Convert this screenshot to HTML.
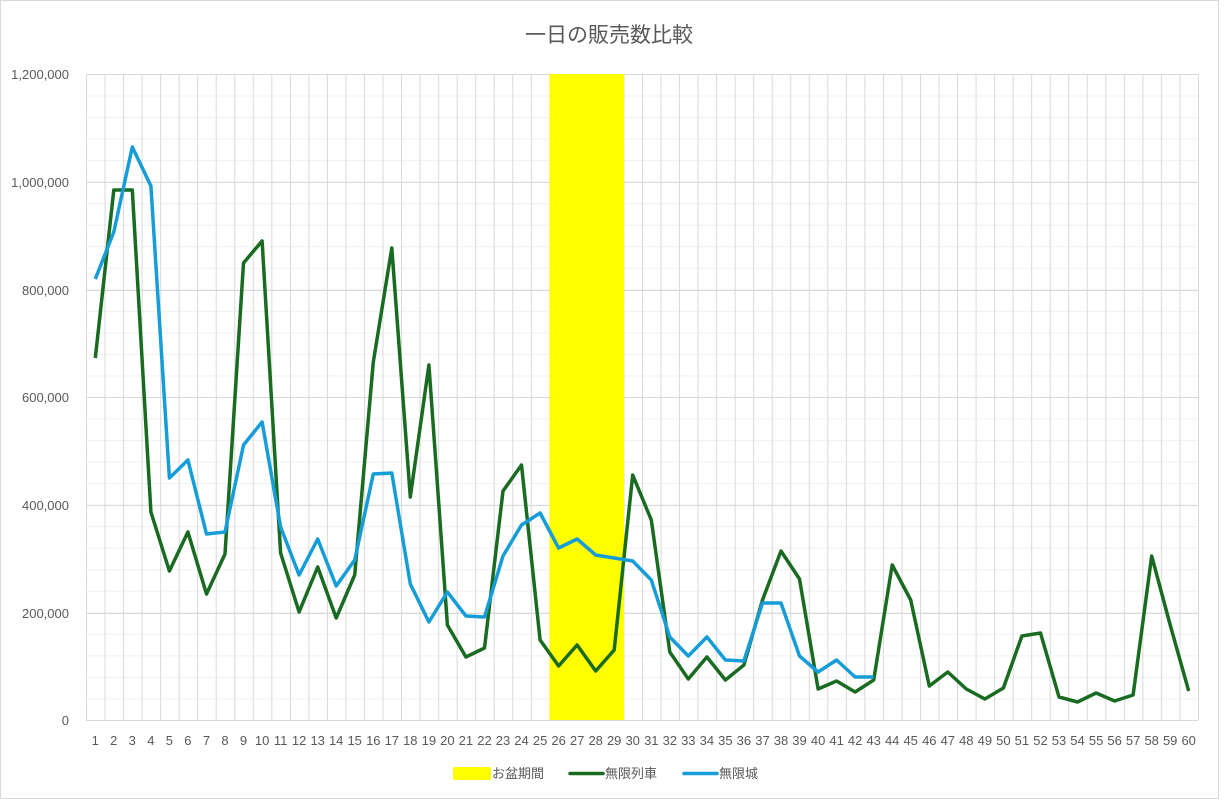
<!DOCTYPE html>
<html><head><meta charset="utf-8"><style>
html,body{margin:0;padding:0;background:#fff}
svg{display:block}
text{font-family:"Liberation Sans","Noto Sans CJK JP",sans-serif;fill:#595959}
</style></head><body>
<svg width="1224" height="801" viewBox="0 0 1224 801" xmlns="http://www.w3.org/2000/svg">
<defs>
<pattern id="minor" x="86" y="74" width="18.533" height="21.533" patternUnits="userSpaceOnUse">
<path d="M0 0.5H18.533" stroke="#f0f0f0" stroke-width="1"/>
</pattern>
<pattern id="vert" x="86" y="0" width="18.533" height="801" patternUnits="userSpaceOnUse">
<path d="M0.5 0V801" stroke="#d9d9d9" stroke-width="1"/>
</pattern>
</defs>
<rect x="0.5" y="0.5" width="1218" height="798" fill="#fff" stroke="#d9d9d9"/>
<text x="609" y="42" font-size="21" text-anchor="middle">一日の販売数比較</text>
<rect x="86" y="74" width="1112" height="646" fill="url(#minor)"/>
<rect x="86" y="74" width="1113" height="646" fill="url(#vert)"/>
<g stroke="#d9d9d9" stroke-width="1">
<path d="M86 74.5H1198M86 182.5H1198M86 290.5H1198M86 397.5H1198M86 505.5H1198M86 613.5H1198M86 720.5H1198"/>
</g>
<rect x="549.5" y="74" width="74.5" height="646" fill="#ffff00"/>
<g font-size="13" text-anchor="end">
<text x="69" y="79">1,200,000</text>
<text x="69" y="187">1,000,000</text>
<text x="69" y="295">800,000</text>
<text x="69" y="402">600,000</text>
<text x="69" y="510">400,000</text>
<text x="69" y="618">200,000</text>
<text x="69" y="725">0</text>
</g>
<polyline fill="none" stroke="#1a6b22" stroke-width="3.5" stroke-linejoin="round" points="95.3,358 113.8,190 132.3,190 150.9,512 169.4,571 187.9,532 206.5,594 225,554 243.5,263 262.1,241 280.6,553 299.1,612 317.7,567 336.2,618 354.7,575 373.3,362 391.8,248 410.3,497 428.9,365 447.4,625 465.9,657 484.5,648 503,491 521.5,465 540.1,640 558.6,666 577.1,645 595.7,671 614.2,650 632.7,475 651.3,520 669.8,652 688.3,679 706.9,657 725.4,680 743.9,665 762.5,600 781,551 799.5,579 818.1,689 836.6,681 855.1,692 873.7,680 892.2,565 910.7,600 929.3,686 947.8,672 966.3,689 984.9,699 1003.4,688 1021.9,636 1040.5,633 1059,697 1077.5,702 1096.1,693 1114.6,701 1133.1,695 1151.7,556 1170.2,625 1188.7,691"/>
<polyline fill="none" stroke="#169dd8" stroke-width="3.5" stroke-linejoin="round" points="95.3,279 113.8,232 132.3,147 150.9,186 169.4,478 187.9,460 206.5,534 225,532 243.5,445 262.1,422 280.6,527 299.1,575 317.7,539 336.2,586 354.7,560 373.3,474 391.8,473 410.3,584 428.9,622 447.4,592 465.9,616 484.5,617 503,556 521.5,525 540.1,513 558.6,548 577.1,539 595.7,555 614.2,558 632.7,561 651.3,580 669.8,637 688.3,656 706.9,637 725.4,660 743.9,661 762.5,603 781,603 799.5,656 818.1,672 836.6,660 855.1,677 873.7,677"/>
<g font-size="13" text-anchor="middle">
<text x="95.3" y="745">1</text><text x="113.8" y="745">2</text><text x="132.3" y="745">3</text><text x="150.9" y="745">4</text><text x="169.4" y="745">5</text><text x="187.9" y="745">6</text><text x="206.5" y="745">7</text><text x="225" y="745">8</text><text x="243.5" y="745">9</text><text x="262.1" y="745">10</text>
<text x="280.6" y="745">11</text><text x="299.1" y="745">12</text><text x="317.7" y="745">13</text><text x="336.2" y="745">14</text><text x="354.7" y="745">15</text><text x="373.3" y="745">16</text><text x="391.8" y="745">17</text><text x="410.3" y="745">18</text><text x="428.9" y="745">19</text><text x="447.4" y="745">20</text>
<text x="465.9" y="745">21</text><text x="484.5" y="745">22</text><text x="503" y="745">23</text><text x="521.5" y="745">24</text><text x="540.1" y="745">25</text><text x="558.6" y="745">26</text><text x="577.1" y="745">27</text><text x="595.7" y="745">28</text><text x="614.2" y="745">29</text><text x="632.7" y="745">30</text>
<text x="651.3" y="745">31</text><text x="669.8" y="745">32</text><text x="688.3" y="745">33</text><text x="706.9" y="745">34</text><text x="725.4" y="745">35</text><text x="743.9" y="745">36</text><text x="762.5" y="745">37</text><text x="781" y="745">38</text><text x="799.5" y="745">39</text><text x="818.1" y="745">40</text>
<text x="836.6" y="745">41</text><text x="855.1" y="745">42</text><text x="873.7" y="745">43</text><text x="892.2" y="745">44</text><text x="910.7" y="745">45</text><text x="929.3" y="745">46</text><text x="947.8" y="745">47</text><text x="966.3" y="745">48</text><text x="984.9" y="745">49</text><text x="1003.4" y="745">50</text>
<text x="1021.9" y="745">51</text><text x="1040.5" y="745">52</text><text x="1059" y="745">53</text><text x="1077.5" y="745">54</text><text x="1096.1" y="745">55</text><text x="1114.6" y="745">56</text><text x="1133.1" y="745">57</text><text x="1151.7" y="745">58</text><text x="1170.2" y="745">59</text><text x="1188.7" y="745">60</text>
</g>
<rect x="453" y="767" width="38" height="13" rx="2" fill="#ffff00"/>
<text x="492" y="778" font-size="13">お盆期間</text>
<path d="M570 773.5H603" stroke="#1a6b22" stroke-width="3.5" stroke-linecap="round"/>
<text x="605" y="778" font-size="13">無限列車</text>
<path d="M684 773.5H717" stroke="#169dd8" stroke-width="3.5" stroke-linecap="round"/>
<text x="719" y="778" font-size="13">無限城</text>
</svg>
</body></html>
